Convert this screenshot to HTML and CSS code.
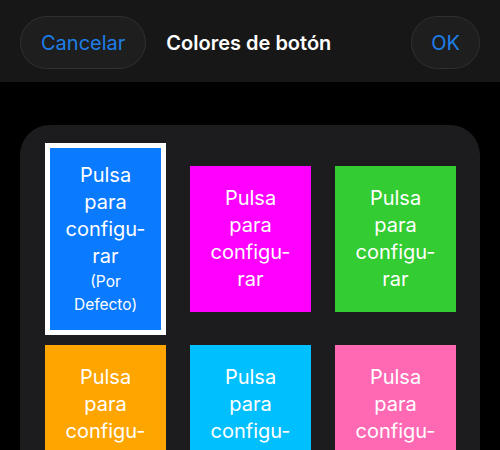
FILE: index.html
```html
<!DOCTYPE html>
<html lang="es">
<head>
    <meta charset="UTF-8">
    <meta name="viewport" content="width=device-width, initial-scale=1.0">
    <title>Colores de botón</title>
    <link rel="stylesheet" href="styles.css">
</head>
<body>
    <div class="header">
        <button class="pill">Cancelar</button>
        <div class="title">Colores de botón</div>
        <button class="pill ok">OK</button>
    </div>

    <div class="panel">
        <div class="grid">
            <div class="tile selected blue">
                <span>Pulsa</span>
                <span>para</span>
                <span>configu-</span>
                <span>rar</span>
                <span class="note">(Por</span>
                <span class="note">Defecto)</span>
            </div>
            <div class="tile magenta">
                <span>Pulsa</span>
                <span>para</span>
                <span>configu-</span>
                <span>rar</span>
            </div>
            <div class="tile green">
                <span>Pulsa</span>
                <span>para</span>
                <span>configu-</span>
                <span>rar</span>
            </div>
            <div class="tile orange">
                <span>Pulsa</span>
                <span>para</span>
                <span>configu-</span>
                <span>rar</span>
            </div>
            <div class="tile cyan">
                <span>Pulsa</span>
                <span>para</span>
                <span>configu-</span>
                <span>rar</span>
            </div>
            <div class="tile pink">
                <span>Pulsa</span>
                <span>para</span>
                <span>configu-</span>
                <span>rar</span>
            </div>
        </div>
    </div>
</body>
</html>
```

FILE: styles.css
```css
body {
    margin: 0;
    width: 500px;
    height: 450px;
    overflow: hidden;
    background-color: #000;
    font-family: "Inter", "Roboto", sans-serif;
    color: #fff;
}
.header {
    height: 82px;
    box-sizing: border-box;
    padding: 16px 20px 13px;
    background-color: #171717;
    display: flex;
    align-items: center;
}
.pill {
    height: 53px;
    padding: 0 20px;
    border: 1px solid #303030;
    border-radius: 27px;
    background-color: #1e1e1e;
    color: #1e7ee8;
    font-family: inherit;
    font-size: 20px;
    cursor: pointer;
}
.ok {
    margin-left: auto;
    width: 69px;
    padding: 0;
}
.title {
    margin-left: 20px;
    font-size: 20px;
    font-weight: 600;
}
.panel {
    margin: 43px 20px 0;
    padding: 18px 24px 0 25px;
    height: 400px;
    background-color: #1c1c1e;
    border-radius: 30px;
}
.grid {
    display: grid;
    grid-template-columns: repeat(3, 121px);
    grid-template-rows: 192px 146px;
    column-gap: 24px;
    row-gap: 10px;
    align-items: center;
}
.tile {
    height: 146px;
    box-sizing: border-box;
    display: flex;
    flex-direction: column;
    align-items: center;
    justify-content: center;
    font-size: 20px;
    line-height: 27px;
    text-align: center;
}
/* second row is cut by the window, so pin its text to the top */
.grid > .tile:nth-child(n+4) {
    align-self: start;
    justify-content: flex-start;
    padding-top: 19px;
}
.tile .note {
    font-size: 15.5px;
    line-height: 23px;
}
.selected {
    height: 192px;
    border: 5px solid #fff;
}
.blue { background-color: #0a7aff; }
.magenta { background-color: #ff00ff; }
.green { background-color: #33cc33; }
.orange { background-color: #ffa500; }
.cyan { background-color: #00bfff; }
.pink { background-color: #ff69b4; }
```
